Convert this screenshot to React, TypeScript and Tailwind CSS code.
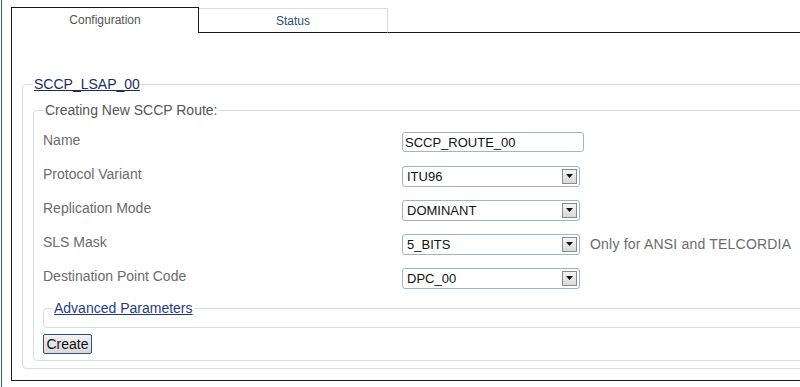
import React from "react";

const font = { fontFamily: '"Liberation Sans", Arial, sans-serif' };

function Select({ value }: { value: string }) {
  return (
    <div className="w-[178px] h-[21px] shrink-0 box-border border border-[#9fb3cc] rounded-[3px] bg-white flex items-center justify-between pl-[4px] pr-[2px]">
      <span className="text-[13px] leading-none text-[#111]">{value}</span>
      <div className="w-[15px] h-[15px] box-border border border-[#8a8a8a] bg-gradient-to-b from-[#f6f6f6] to-[#d8d8d8] flex items-center justify-center">
        <svg width="7" height="4" viewBox="0 0 7 4">
          <path d="M0 0 H7 L3.5 4 Z" fill="#111" />
        </svg>
      </div>
    </div>
  );
}

function Row({ label, children }: { label: string; children: React.ReactNode }) {
  return (
    <div className="h-[34px] flex items-center">
      <div className="w-[359px] shrink-0 text-[14px] text-[#6b6b6b] leading-none -mt-[4px]">{label}</div>
      {children}
    </div>
  );
}

export default function App() {
  return (
    <div className="w-[800px] h-[387px] bg-white overflow-hidden flex" style={font}>
      <div className="w-[1px] shrink-0" />
      <div className="w-[1px] shrink-0 h-full bg-[#2a5b8b]" />
      <div className="w-[9px] shrink-0" />
      <div className="w-[900px] shrink-0 pt-[7px] flex flex-col">
        {/* Tabs */}
        <div className="flex h-[26px]">
          <div className="w-[188px] h-[26px] box-border border-t border-l border-r border-[#1a1a1a] bg-white flex items-center justify-center text-[12px] text-[#555] pb-[1px]">
            Configuration
          </div>
          <div className="w-[189px] h-[25px] mt-[1px] box-border border-t border-r border-[#dcdce6] border-b border-b-[#1a1a1a] flex items-center justify-center text-[12px] text-[#2d4a78]">
            Status
          </div>
          <div className="flex-1 h-[26px] box-border border-b border-[#1a1a1a]" />
        </div>
        {/* Panel */}
        <div className="h-[348px] box-border border-l border-b border-[#1a1a1a] pl-[10px] pt-[43px]">
          <fieldset className="border border-[#d8dce3] rounded-[4px] pl-[10px] pr-0 pt-[10px] pb-[7px] m-0 w-[880px]">
            <legend className="px-[1px] text-[14px] leading-[16px] text-[#1c2e5c] underline">
              SCCP_LSAP_00
            </legend>
            <fieldset className="border border-[#d8dce3] rounded-[4px] pl-[9px] pr-0 pt-[7px] pb-[6px] m-0">
              <legend className="ml-[1px] px-[1px] text-[14px] leading-[16px] text-[#555]">
                Creating New SCCP Route:
              </legend>
              <Row label="Name">
                <div className="w-[182px] h-[20px] shrink-0 box-border border border-[#9fb3cc] rounded-[3px] bg-white flex items-center pl-[2px]">
                  <span className="text-[13px] leading-none text-[#111]">SCCP_ROUTE_00</span>
                </div>
              </Row>
              <Row label="Protocol Variant">
                <Select value="ITU96" />
              </Row>
              <Row label="Replication Mode">
                <Select value="DOMINANT" />
              </Row>
              <Row label="SLS Mask">
                <Select value="5_BITS" />
                <span className="ml-[10px] text-[14px] leading-none text-[#6b6b6b] whitespace-nowrap tracking-[0.2px]">Only for ANSI and TELCORDIA</span>
              </Row>
              <Row label="Destination Point Code">
                <Select value="DPC_00" />
              </Row>
              <fieldset className="mt-[5px] border border-[#d8dce3] rounded-[4px] p-0 pb-[11px] m-0">
                <legend className="ml-[9px] px-[1px] text-[14px] leading-[16px] text-[#1f3a8a] underline">
                  Advanced Parameters
                </legend>
              </fieldset>
              <button className="mt-[6px] w-[49px] h-[20px] box-border border border-[#2d4f7c] rounded-[2px] bg-gradient-to-b from-[#f2f2f2] to-[#d9d9d9] text-[14px] leading-none text-[#111] flex items-center justify-center">
                Create
              </button>
            </fieldset>
          </fieldset>
        </div>
      </div>
    </div>
  );
}
